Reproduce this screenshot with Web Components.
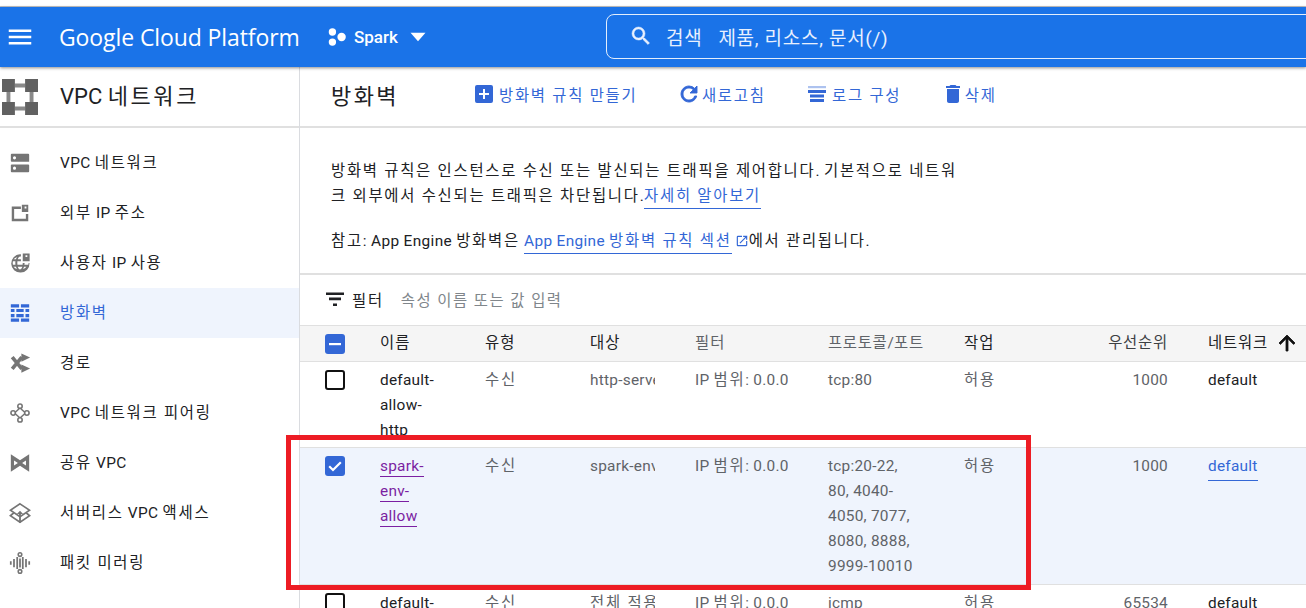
<!DOCTYPE html>
<html lang="ko">
<head>
<meta charset="utf-8">
<title>방화벽</title>
<style>
  html, body { margin: 0; height: 608px; overflow: hidden; background: #fff; }
  body { font-family: Roboto, "Noto Sans CJK KR", sans-serif; font-size: 15.4px; color: #202124; }
</style>
</head>
<body>
<gcp-app>
  <gcp-topbar slot="top"></gcp-topbar>
  <gcp-sidebar slot="side"></gcp-sidebar>
  <gcp-main slot="main"></gcp-main>
</gcp-app>

<script>
const ICONS = {
  menu: '<path d="M3 18h18v-2H3v2zm0-5h18v-2H3v2zm0-7v2h18V6H3z"/>',
  search: '<path stroke="currentColor" stroke-width=".5" d="M15.5 14h-.79l-.28-.27A6.471 6.471 0 0 0 16 9.5 6.5 6.5 0 1 0 9.5 16c1.61 0 3.09-.59 4.23-1.57l.27.28v.79l5 4.99L20.49 19l-4.99-5zm-6 0C7.01 14 5 11.99 5 9.5S7.01 5 9.5 5 14 7.01 14 9.5 11.99 14 9.5 14z"/>',
  project: '<circle cx="7" cy="6.5" r="4"/><circle cx="7" cy="17.5" r="4"/><circle cx="17" cy="12" r="4.6"/>',
  caret: '<path d="M3 7h18l-9 10z"/>',
  add: '<path d="M19 3H5a2 2 0 0 0-2 2v14a2 2 0 0 0 2 2h14a2 2 0 0 0 2-2V5a2 2 0 0 0-2-2zm-2 10h-4v4h-2v-4H7v-2h4V7h2v4h4v2z"/>',
  refresh: '<path stroke="currentColor" stroke-width=".9" d="M17.65 6.35A7.958 7.958 0 0 0 12 4c-4.42 0-7.99 3.58-7.99 8s3.57 8 7.99 8c3.73 0 6.84-2.55 7.73-6h-2.08A5.99 5.99 0 0 1 12 18c-3.31 0-6-2.69-6-6s2.69-6 6-6c1.66 0 3.14.69 4.22 1.78L13 11h7V4l-2.35 2.35z"/>',
  logs: '<path d="M3 4h18v2.200H3z" opacity=".4"/><path d="M3 8h18v3H3zM5 12.500h14v3H5zM5 17h14v3H5z"/>',
  trash: '<path d="M6 19c0 1.1.9 2 2 2h8c1.1 0 2-.9 2-2V7H6v12zM19 4h-3.5l-1-1h-5l-1 1H5v2h14V4z"/>',
  filter: '<path d="M10 19h4v-2.600h-4V19zM3 5.500v2.600h18V5.500H3zM6 13.200h12v-2.600H6v2.600z"/>',
  up: '<path stroke="currentColor" stroke-width=".8" d="M4 12l1.41 1.41L11 7.83V20h2V7.83l5.58 5.59L20 12l-8-8-8 8z"/>',
  open: '<path d="M19 19H5V5h7V3H5a2 2 0 0 0-2 2v14a2 2 0 0 0 2 2h14c1.1 0 2-.9 2-2v-7h-2v7zM14 3v2h3.59l-9.83 9.83 1.41 1.41L19 6.41V10h2V3h-7z"/>',
  vpc: '<path d="M0 0h8.600v8.600H0zM15.400 0H24v8.600h-8.600zM0 15.400h8.600V24H0zM15.400 15.400H24V24h-8.600z"/><path opacity=".75" d="M8.600 3h6.800v2.600H8.600zM8.600 18.400h6.800V21H8.600zM3 8.600h2.600v6.800H3zM18.400 8.600H21v6.800h-2.600z"/>',
  network: '<path fill-rule="evenodd" d="M3 2h18a1 1 0 0 1 1 1v7.500H3a1 1 0 0 1-1-1V3a1 1 0 0 1 1-1zm3 2.700a1.700 1.700 0 1 0 0 3.400 1.700 1.700 0 0 0 0-3.400zM3 13.500h18a1 1 0 0 1 1 1V21a1 1 0 0 1-1 1H3a1 1 0 0 1-1-1v-6.500a1 1 0 0 1 1-1zm3 2.400a1.700 1.700 0 1 0 0 3.400 1.700 1.700 0 0 0 0-3.400z"/>',
  ip: '<path d="M3 5h10v2.600H5.600v10.800h12.800V13H21v8H3z"/><path fill-rule="evenodd" d="M14 3h7v8h-7zm3 2v2h2V5z"/>',
  ipuse: '<path d="M12 2.500a9.500 9.500 0 0 1 1 .05V5h-1c-.9 0-1.800 1.100-2.400 3h3.400v2H9.200a16 16 0 0 0 0 4h5.600c.1-.6.1-1.200.2-1.900h2c0 .7-.1 1.300-.2 1.900H21a9.500 9.500 0 0 0 .4-1.900h1A10 10 0 1 1 12 2.500zM7.600 8c.3-1 .7-1.900 1.200-2.600A8 8 0 0 0 5 8zM7 10H4.300a8 8 0 0 0 0 4H7a17 17 0 0 1 0-4zm.6 6H5a8 8 0 0 0 3.800 2.600c-.5-.7-.9-1.600-1.200-2.600zm7 0H9.600c.6 1.900 1.500 3 2.400 3s1.800-1.100 2.600-3zm4.400 0h-2.600c-.3 1-.7 1.900-1.200 2.600A8 8 0 0 0 19 16z"/><path fill-rule="evenodd" d="M15 1.500h7.500v8.500H15zm3 2v2h2v-2z"/>',
  firewall: '<path d="M2 2.500h9v3.500H2zM13 2.500h9v3.500h-9zM2 18h9v3.500H2zM13 18h9v3.500h-9zM2 7.500h4v3.500H2zM8 7.500h8v3.500H8zM18 7.500h4v3.500h-4zM2 13h4v3.500H2zM8 13h8v3.500H8zM18 13h4v3.500h-4z"/>',
  route: '<path fill="none" stroke="currentColor" stroke-width="4" d="M3.500 5.500 14 18.500M3.500 18.500 14 5.500"/><path d="M13.500 1.500 23 6l-9.500 4.500zM13.500 13.500 23 18l-9.500 4.500z"/>',
  peering: '<path fill="none" stroke="currentColor" stroke-width="1.600" d="M12 6.500 6 12l6 5.500 6-5.500z"/><g fill="#fff" stroke="currentColor" stroke-width="1.700"><circle cx="12" cy="4.500" r="2.400"/><circle cx="12" cy="19.500" r="2.400"/><circle cx="4.500" cy="12" r="2.400"/><circle cx="19.500" cy="12" r="2.400"/></g>',
  shared: '<path fill-rule="evenodd" d="M2 2.500l10 6.500 10-6.500v19L12 15 2 21.500zm3.500 6.700v5.600L9.700 12zm13 0L14.300 12l4.200 2.800z"/>',
  service: '<path fill="none" stroke="currentColor" stroke-width="1.800" d="M12 2 22.500 9 12 16 1.500 9zM5 12 1.500 15 12 22l10.500-7L19 12"/><path d="M12 9.500l3.400 3.500h-2.400v9.500h-2V13H8.600z"/>',
  mirror: '<path d="M1 10h1.900v4H1zM4.500 7.500h1.900v9H4.500zM8 5.500h1.900v13H8zM11.050 7h1.900v10h-1.900zM14.100 5.500H16v13h-1.900zM17.600 7.500h1.900v9h-1.900zM21.100 10H23v4h-1.900z"/><path fill-rule="evenodd" d="M12 0a2.800 2.800 0 1 1 0 5.600A2.800 2.800 0 0 1 12 0zm0 1.700a1.100 1.100 0 1 0 0 2.200 1.100 1.100 0 0 0 0-2.200zM12 18.400a2.800 2.800 0 1 1 0 5.600 2.800 2.800 0 0 1 0-5.600zm0 1.700a1.100 1.100 0 1 0 0 2.200 1.100 1.100 0 0 0 0-2.200z"/>'
};

function svg(name, size) {
  return `<svg width="${size}" height="${size}" viewBox="0 0 24 24" fill="currentColor" aria-hidden="true">${ICONS[name]}</svg>`;
}

function ko(text, spacing = 1.75) {
  return text.replace(/[가-힣]+( [가-힣]+)*/g, (run) => `<span style="letter-spacing:${spacing}px">${run}</span>`);
}

class GcpApp extends HTMLElement {
  constructor() {
    super();
    this.attachShadow({ mode: 'open' });
    this.shadowRoot.innerHTML = `
      <style>
        :host { display: block; position: relative; height: 608px; overflow: hidden; padding-top: 6px; box-sizing: border-box; }
        .rule { height: 1px; background: #c4c4c4; }
        .body { display: flex; height: 541px; }
        .mark { position: absolute; left: 286px; top: 435px; width: 745px; height: 155px; box-sizing: border-box; border: 5px solid #ed1c24; pointer-events: none; }
      </style>
      <div class="rule"></div>
      <slot name="top"></slot>
      <div class="body">
        <slot name="side"></slot>
        <slot name="main"></slot>
      </div>
      <div class="mark"></div>
    `;
  }
}

class GcpTopbar extends HTMLElement {
  constructor() {
    super();
    this.attachShadow({ mode: 'open' });
    this.shadowRoot.innerHTML = `
      <style>
        :host { display: flex; align-items: center; position: relative; z-index: 2; height: 60px; background: #1a73e8; color: #fff; box-shadow: 0 1px 3px rgba(0,0,0,.45); }
        .menu { display: flex; margin-left: 5px; width: 54px; }
        .brand { font-family: "Open Sans", Roboto, sans-serif; font-size: 23px; width: 269px; white-space: nowrap; letter-spacing: -.1px; }
        .project { display: flex; align-items: center; width: 278px; font-size: 17px; font-weight: 500; }
        .project svg:first-child { margin-left: -2px; }
        .project span { margin: 0 10px 0 6px; }
        .search { display: flex; align-items: center; flex: 1; height: 45px; margin-top: -2px; margin-right: -8px; box-sizing: border-box; border: 1px solid #e3eefc; border-radius: 8px; padding-left: 22px; font-size: 19px; letter-spacing: .7px; color: #e8f0fe; }
        .search svg { margin-right: 13px; }
        .search b { font-weight: 400; margin-right: 16px; }
      </style>
      <div class="menu">${svg('menu', 30)}</div>
      <div class="brand">Google Cloud Platform</div>
      <div class="project">${svg('project', 22)}<span>Spark</span>${svg('caret', 20)}</div>
      <div class="search">${svg('search', 24)}<b>검색</b>제품, 리소스, 문서(/)</div>
    `;
  }
}

class GcpNavItem extends HTMLElement {
  constructor() {
    super();
    this.attachShadow({ mode: 'open' });
  }
  connectedCallback() {
    this.shadowRoot.innerHTML = `
      <style>
        :host { display: flex; align-items: center; height: 50px; padding-left: 9px; color: #202124; letter-spacing: .35px; }
        :host([active]) { background: #eff4fd; color: #3367d6; }
        .icon { display: flex; width: 51px; color: #757575; }
        :host([active]) .icon { color: #3367d6; }
        .label { margin-bottom: 4px; }
      </style>
      <div class="icon">${svg(this.getAttribute('icon'), 22)}</div>
      <div class="label"><slot></slot></div>
    `;
  }
}

class GcpSidebar extends HTMLElement {
  constructor() {
    super();
    this.attachShadow({ mode: 'open' });
    const items = [
      ['network', 'VPC 네트워크'],
      ['ip', '외부 IP 주소'],
      ['ipuse', '사용자 IP 사용'],
      ['firewall', '방화벽'],
      ['route', '경로'],
      ['peering', 'VPC 네트워크 피어링'],
      ['shared', '공유 VPC'],
      ['service', '서버리스 VPC 액세스'],
      ['mirror', '패킷 미러링']
    ];
    this.shadowRoot.innerHTML = `
      <style>
        :host { display: block; width: 299px; border-right: 1px solid #dadce0; flex: none; }
        .head { display: flex; align-items: center; height: 54px; padding-bottom: 5px; border-bottom: 2px solid #e0e0e0; font-size: 22px; color: #202124; }
        .head div { display: flex; width: 60px; margin-top: 6px; padding-left: 2px; box-sizing: border-box; color: #616161; }
        nav { padding-top: 10px; }
      </style>
      <div class="head"><div>${svg('vpc', 36)}</div><span>${ko('VPC 네트워크', 2.6)}</span></div>
      <nav>
        ${items.map(([icon, label]) => `<gcp-nav-item icon="${icon}" ${icon === 'firewall' ? 'active' : ''}>${ko(label)}</gcp-nav-item>`).join('')}
      </nav>
    `;
  }
}

class GcpAction extends HTMLElement {
  constructor() {
    super();
    this.attachShadow({ mode: 'open' });
  }
  connectedCallback() {
    this.shadowRoot.innerHTML = `
      <style>
        :host { display: flex; align-items: center; color: #3367d6; white-space: nowrap; }
        svg { margin-right: ${this.getAttribute('gap') || 3}px; }
      </style>
      ${svg(this.getAttribute('icon'), 24)}<slot></slot>
    `;
  }
}

class GcpCheck extends HTMLElement {
  constructor() {
    super();
    this.attachShadow({ mode: 'open' });
  }
  connectedCallback() {
    const state = this.getAttribute('state');
    let mark = '';
    if (state === 'some') mark = '<path d="M4 9h12v2.200H4z" fill="#fff"/>';
    if (state === 'on') mark = '<path d="M4.200 10.200 8 14l7.800-7.800" fill="none" stroke="#fff" stroke-width="2.200"/>';
    this.shadowRoot.innerHTML = `
      <style>
        :host { display: block; width: 20px; height: 20px; box-sizing: border-box; border-radius: 3px; }
        :host([state="off"]) { border: 2px solid #111; margin-top: 2px; }
        :host([state="on"]) { margin-top: 2px; }
        :host([state="some"]), :host([state="on"]) { background: #3367d6; }
        svg { display: block; }
      </style>
      ${state === 'off' ? '' : `<svg width="20" height="20" viewBox="0 0 20 20">${mark}</svg>`}
    `;
  }
}

class GcpRow extends HTMLElement {
  constructor() {
    super();
    this.attachShadow({ mode: 'open' });
    this.shadowRoot.innerHTML = `
      <style>
        :host {
          display: grid;
          grid-template-columns: 55px 105px 105px 105px 133px 136px 80px 124px 1fr;
          padding: 6px 0 0 25px;
          line-height: 25px;
          color: #5f6368;
          letter-spacing: .25px;
          border-bottom: 1px solid #e0e0e0;
          overflow: hidden;
        }
        :host([head]) { height: 37px; box-sizing: border-box; padding-top: 0; align-items: center; background: #f5f5f5; border-top: 1px solid #e0e0e0; }
        :host([selected]) { background: #eff4fd; }
      </style>
      <slot></slot>
    `;
  }
}

class GcpCell extends HTMLElement {
  constructor() {
    super();
    this.attachShadow({ mode: 'open' });
    this.shadowRoot.innerHTML = `
      <style>
        :host { display: block; min-width: 0; }
        :host([dark]) { color: #202124; }
        :host([num]) { text-align: right; }
        :host([net]) { display: flex; align-items: flex-start; padding-left: 40px; white-space: nowrap; }
        :host([name]) { padding-right: 40px; color: #202124; }
        :host([clip]) { overflow: hidden; white-space: nowrap; margin-right: 40px; }
        :host([wrap]) { padding-right: 48px; }
      </style>
      <slot></slot>
    `;
  }
}

class GcpMain extends HTMLElement {
  constructor() {
    super();
    this.attachShadow({ mode: 'open' });
    const range = ko('IP 범위: 0.0.0.0/0');
    const allow = ko('허용');
    const inbound = ko('수신');
    this.shadowRoot.innerHTML = `
      <style>
        :host { display: block; flex: 1; min-width: 0; overflow: hidden; }
        .bar { display: flex; align-items: center; height: 54px; padding-bottom: 5px; border-bottom: 2px solid #e0e0e0; }
        h1 { margin: 0 0 0 31px; width: 141px; font-size: 22px; font-weight: 400; color: #202124; }
        gcp-action { margin-right: 39.5px; }
        .note { height: 147px; box-sizing: border-box; padding: 31px 348px 0 31px; line-height: 25px; color: #202124; letter-spacing: .35px; border-bottom: 2px solid #e0e0e0; }
        .note p { margin: 0; }
        .note p + p { margin-top: 20px; }
        a { color: #3367d6; text-decoration: none; border-bottom: 1px solid currentColor; padding-bottom: 3px; }
        .note svg { vertical-align: -2px; margin-left: 3px; color: #3367d6; }
        .filter { display: flex; align-items: center; height: 48px; padding: 0 0 2px 23px; color: #202124; }
        .filter svg { margin-right: 5px; }
        .filter i { font-style: normal; margin-left: 17px; color: #80868b; }
        .cols svg { margin-left: 7px; color: #111; }
        .purple { color: #7b1fa2; }
        gcp-row a { padding-bottom: 1px; }
      </style>
      <div class="bar">
        <h1>${ko('방화벽', 2.4)}</h1>
        <gcp-action icon="add">${ko('방화벽 규칙 만들기')}</gcp-action>
        <gcp-action icon="refresh" gap="1">${ko('새로고침')}</gcp-action>
        <gcp-action icon="logs">${ko('로그 구성')}</gcp-action>
        <gcp-action icon="trash" gap="0">${ko('삭제')}</gcp-action>
      </div>
      <div class="note">
        <p>${ko('방화벽 규칙은 인스턴스로 수신 또는 발신되는 트래픽을 제어합니다')}. ${ko('기본적으로 네트워크 외부에서 수신되는 트래픽은 차단됩니다')}.<a href="#">${ko('자세히 알아보기')}</a></p>
        <p>${ko('참고')}: App Engine ${ko('방화벽은')} <a href="#">App Engine ${ko('방화벽 규칙 섹션')}</a>${svg('open', 14)}${ko('에서 관리됩니다')}.</p>
      </div>
      <div class="filter">${svg('filter', 24)}${ko('필터')}<i>${ko('속성 이름 또는 값 입력', 1.45)}</i></div>
      <gcp-row head class="cols">
        <gcp-cell><gcp-check state="some"></gcp-check></gcp-cell>
        <gcp-cell dark>${ko('이름', 1)}</gcp-cell><gcp-cell dark>${ko('유형', 1)}</gcp-cell><gcp-cell dark>${ko('대상', 1)}</gcp-cell>
        <gcp-cell>${ko('필터', 1)}</gcp-cell><gcp-cell>${ko('프로토콜', .7)}/${ko('포트', .7)}</gcp-cell><gcp-cell dark>${ko('작업', 1)}</gcp-cell>
        <gcp-cell num style="color:#3c4043">${ko('우선순위', .8)}</gcp-cell>
        <gcp-cell net dark>${ko('네트워크', .8)}${svg('up', 24)}</gcp-cell>
      </gcp-row>
      <gcp-row style="height:79px">
        <gcp-cell><gcp-check state="off"></gcp-check></gcp-cell>
        <gcp-cell name>default-allow-http</gcp-cell><gcp-cell>${inbound}</gcp-cell>
        <gcp-cell clip>http-server</gcp-cell><gcp-cell clip>${range}</gcp-cell>
        <gcp-cell>tcp:80</gcp-cell><gcp-cell>${allow}</gcp-cell><gcp-cell num>1000</gcp-cell>
        <gcp-cell net dark>default</gcp-cell>
      </gcp-row>
      <gcp-row selected style="height:130px">
        <gcp-cell><gcp-check state="on"></gcp-check></gcp-cell>
        <gcp-cell name class="purple"><a href="#" class="purple">spark-</a><br><a href="#" class="purple">env-</a><br><a href="#" class="purple">allow</a></gcp-cell>
        <gcp-cell>${inbound}</gcp-cell>
        <gcp-cell clip>spark-env</gcp-cell><gcp-cell clip>${range}</gcp-cell>
        <gcp-cell wrap>tcp:20-22, 80, 4040-4050, 7077, 8080, 8888, 9999-10010</gcp-cell>
        <gcp-cell>${allow}</gcp-cell><gcp-cell num>1000</gcp-cell>
        <gcp-cell net><a href="#">default</a></gcp-cell>
      </gcp-row>
      <gcp-row style="height:79px">
        <gcp-cell><gcp-check state="off"></gcp-check></gcp-cell>
        <gcp-cell name>default-allow-icmp</gcp-cell><gcp-cell>${inbound}</gcp-cell>
        <gcp-cell clip>${ko('전체 적용')}</gcp-cell><gcp-cell clip>${range}</gcp-cell>
        <gcp-cell>icmp</gcp-cell><gcp-cell>${allow}</gcp-cell><gcp-cell num>65534</gcp-cell>
        <gcp-cell net dark>default</gcp-cell>
      </gcp-row>
    `;
  }
}

// children first, so they are ready when the parents build their markup
customElements.define('gcp-check', GcpCheck);
customElements.define('gcp-cell', GcpCell);
customElements.define('gcp-row', GcpRow);
customElements.define('gcp-action', GcpAction);
customElements.define('gcp-nav-item', GcpNavItem);
customElements.define('gcp-topbar', GcpTopbar);
customElements.define('gcp-sidebar', GcpSidebar);
customElements.define('gcp-main', GcpMain);
customElements.define('gcp-app', GcpApp);
</script>
</body>
</html>
